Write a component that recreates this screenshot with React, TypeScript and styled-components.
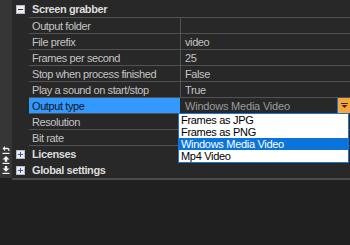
import styled, { createGlobalStyle } from "styled-components";

const GlobalStyle = createGlobalStyle`
  html, body {
    margin: 0;
    padding: 0;
    background: #202020;
  }
  body {
    font-family: "Liberation Sans", Arial, sans-serif;
    font-size: 11px;
  }
`;

type Prop = { name: string; value: string };

const properties: Prop[] = [
    {name: "Output folder", value: ""},
    {name: "File prefix", value: "video"},
    {name: "Frames per second", value: "25"},
    {name: "Stop when process finished", value: "False"},
    {name: "Play a sound on start/stop", value: "True"},
];

const tailProperties: Prop[] = [
    {name: "Resolution", value: ""},
    {name: "Bit rate", value: ""},
];

const outputTypes = ["Frames as JPG", "Frames as PNG", "Windows Media Video", "Mp4 Video"];

function Expander({open}: { open: boolean }) {
    return (
        <ExpanderBox>
            <svg width="7" height="7" viewBox="0 0 7 7">
                <rect x="1" y="3" width="5" height="1" fill={open ? "#30353f" : "#2b5cc0"}/>
                {!open && <rect x="3" y="1" width="1" height="5" fill="#2b5cc0"/>}
            </svg>
        </ExpanderBox>
    );
}

function ToolIcon({kind}: { kind: "undo" | "up" | "down" }) {
    return (
        <ToolButton>
            <svg width="8" height="8" viewBox="0 0 8 8" fill="#f2f2f2">
                {kind === "undo" && (
                    <>
                        <path d="M0.5 2.5 L3 0 V1.8 H5.5 Q7.5 1.8 7.5 3.8 V5 H6.3 V3.9 Q6.3 3.2 5.5 3.2 H3 V5 Z"/>
                        <rect x="0.5" y="6.8" width="7" height="1.2"/>
                    </>
                )}
                {kind === "up" && (
                    <>
                        <path d="M4 0 L7.5 3.4 H5.2 V5.8 H2.8 V3.4 H0.5 Z"/>
                        <rect x="0.5" y="6.8" width="7" height="1.2"/>
                    </>
                )}
                {kind === "down" && (
                    <>
                        <path d="M4 5.8 L7.5 2.4 H5.2 V0 H2.8 V2.4 H0.5 Z"/>
                        <rect x="0.5" y="6.8" width="7" height="1.2"/>
                    </>
                )}
            </svg>
        </ToolButton>
    );
}

function PropertyLine({prop}: { prop: Prop }) {
    return (
        <PropertyRow>
            <NameCell>{prop.name}</NameCell>
            <ValueCell>{prop.value}</ValueCell>
        </PropertyRow>
    );
}

export default function App() {
    return (
        <Page>
            <GlobalStyle/>
            <SideStrip>
                <ToolIcon kind="undo"/>
                <ToolIcon kind="up"/>
                <ToolIcon kind="down"/>
            </SideStrip>
            <Grid>
                <CategoryRow>
                    <ExpanderCell><Expander open/></ExpanderCell>
                    <CategoryLabel $open>Screen grabber</CategoryLabel>
                </CategoryRow>
                {properties.map(p => <PropertyLine key={p.name} prop={p}/>)}
                <PropertyRow>
                    <NameCell $selected>Output type</NameCell>
                    <EditorCell>
                        <EditorText>Windows Media Video</EditorText>
                        <DropButton>
                            <svg width="7" height="5" viewBox="0 0 7 5">
                                <rect x="0" y="0" width="7" height="1" fill="#3b2a12"/>
                                <path d="M0.5 2 H6.5 L3.5 5 Z" fill="#3b2a12"/>
                            </svg>
                        </DropButton>
                        <DropList>
                            {outputTypes.map(t => (
                                <DropItem key={t} $active={t === "Windows Media Video"}>{t}</DropItem>
                            ))}
                        </DropList>
                    </EditorCell>
                </PropertyRow>
                {tailProperties.map(p => <PropertyLine key={p.name} prop={p}/>)}
                <CategoryRow>
                    <ExpanderCell><Expander open={false}/></ExpanderCell>
                    <CategoryLabel>Licenses</CategoryLabel>
                </CategoryRow>
                <CategoryRow>
                    <ExpanderCell><Expander open={false}/></ExpanderCell>
                    <CategoryLabel>Global settings</CategoryLabel>
                </CategoryRow>
            </Grid>
        </Page>
    );
}

const Page = styled.div`
  width: 350px;
  height: 245px;
  background: #202020;
  display: flex;
  align-items: flex-start;
  overflow: hidden;
`;

const SideStrip = styled.div`
  width: 12px;
  height: 178px;
  background: #363636;
  display: flex;
  flex-direction: column;
  justify-content: flex-end;
  align-items: center;
  gap: 2px;
  padding-bottom: 4px;
  box-sizing: border-box;
`;

const ToolButton = styled.div`
  width: 8px;
  height: 8px;
  flex: none;
  display: flex;
  align-items: center;
  justify-content: center;

  svg {
    display: block;
  }
`;

const Grid = styled.div`
  flex: 1;
  background: #282828;
  border-bottom: 2px solid #4c4c4c;
  display: flex;
  flex-direction: column;
`;

const CategoryRow = styled.div`
  display: flex;
  height: 16px;

  &:first-child {
    height: 18px;
  }
`;

const ExpanderCell = styled.div`
  width: 17px;
  display: flex;
  align-items: center;
  justify-content: center;
`;

const ExpanderBox = styled.div`
  width: 9px;
  height: 9px;
  box-sizing: border-box;
  background: #eeeeee;
  border: 1px solid #b8bcc4;
  display: flex;
  align-items: center;
  justify-content: center;
`;

const CategoryLabel = styled.div<{ $open?: boolean }>`
  flex: 1;
  padding-left: 3px;
  font-weight: bold;
  color: #dcdcdc;
  letter-spacing: -0.4px;
  display: flex;
  align-items: center;
  border-bottom: ${p => (p.$open ? "1px solid #525252" : "none")};
`;

const PropertyRow = styled.div`
  display: flex;
  height: 16px;
  margin-left: 17px;
  border-bottom: 1px solid #525252;
  box-sizing: border-box;
`;

const NameCell = styled.div<{ $selected?: boolean }>`
  width: 152px;
  box-sizing: border-box;
  padding-left: 3px;
  border-right: 1px solid ${p => (p.$selected ? "#282828" : "#525252")};
  background: ${p => (p.$selected ? "#3399ff" : "transparent")};
  color: ${p => (p.$selected ? "#10151c" : "#c4c4c4")};
  letter-spacing: -0.4px;
  white-space: nowrap;
  display: flex;
  align-items: center;
`;

const ValueCell = styled.div`
  flex: 1;
  padding-left: 4px;
  color: #c4c4c4;
  letter-spacing: -0.4px;
  display: flex;
  align-items: center;
`;

const EditorCell = styled.div`
  flex: 1;
  position: relative;
  display: flex;
  align-items: center;
`;

const EditorText = styled.div`
  flex: 1;
  padding-left: 4px;
  color: #9c9c9c;
  letter-spacing: -0.2px;
`;

const DropButton = styled.div`
  width: 13px;
  height: 100%;
  box-sizing: border-box;
  border-left: 1px solid #1a74d6;
  background: #f6a640;
  display: flex;
  align-items: center;
  justify-content: center;
`;

const DropList = styled.div`
  position: absolute;
  top: 100%;
  left: -3px;
  width: 171px;
  box-sizing: border-box;
  background: #ffffff;
  border: 1px solid #1a74d6;
  z-index: 2;
`;

const DropItem = styled.div<{ $active?: boolean }>`
  height: 12px;
  line-height: 12px;
  padding-left: 2px;
  color: ${p => (p.$active ? "#ffffff" : "#000000")};
  background: ${p => (p.$active ? "#0a74da" : "transparent")};
  letter-spacing: -0.3px;
  white-space: nowrap;
`;
